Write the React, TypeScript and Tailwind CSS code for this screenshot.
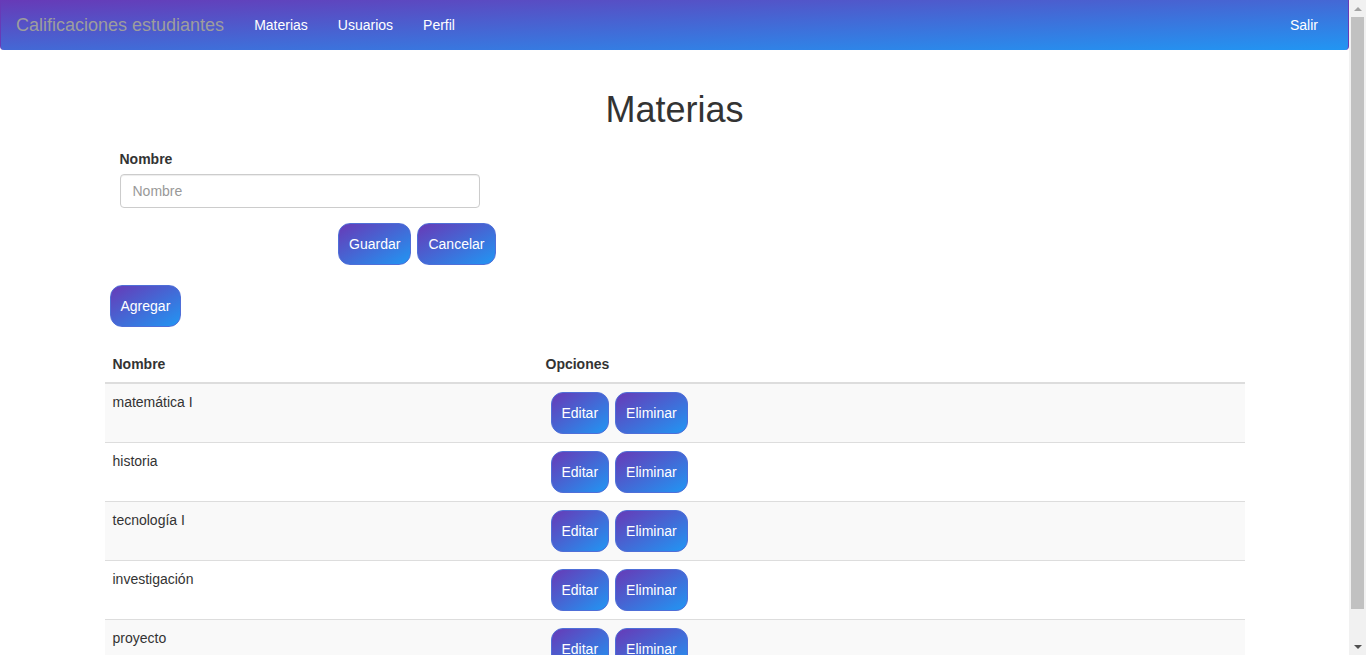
import { useState } from 'react';

const materias = ['matemática I', 'historia', 'tecnología I', 'investigación', 'proyecto'];

// boton con degradado morado -> azul
const BTN =
  'inline-block h-[42px] px-[10px] rounded-[12px] text-white text-[14px] leading-[20px] bg-[linear-gradient(to_bottom_right,#673ab7,#2196f3)] border border-[#4f6fd8]';

export default function App() {
  const [nombre, setNombre] = useState('');

  return (
    <div className="flex h-screen overflow-hidden bg-white text-[#333] text-[14px] leading-[20px] font-['Liberation_Sans',Arial,sans-serif]">
      <div className="flex-1 min-w-0 h-full overflow-hidden">
        <nav className="h-[50px] flex items-center justify-between rounded-b-[4px] border-l border-r border-[#673ab7] bg-[linear-gradient(to_bottom_right,#673ab7,#2196f3)] pl-[15px] pr-[15px]">
          <div className="flex items-center">
            <span className="text-[18px] leading-[20px] text-[#9d9d9d] pr-[15px]">Calificaciones estudiantes</span>
            <a className="text-white px-[15px] py-[15px]">Materias</a>
            <a className="text-white px-[15px] py-[15px]">Usuarios</a>
            <a className="text-white px-[15px] py-[15px]">Perfil</a>
          </div>
          <a className="text-white px-[15px] py-[15px]">Salir</a>
        </nav>

        <div className="w-[1140px] mx-auto">
          <h1 className="mt-[40px] mb-[10px] text-center text-[36px] leading-[40px]">Materias</h1>

          <div className="w-[391px] pt-[9px]">
            <div className="w-[390px] px-[15px]">
              <label className="block font-bold mb-[5px]">Nombre</label>
              <input
                value={nombre}
                onChange={(e) => setNombre(e.target.value)}
                placeholder="Nombre"
                className="w-full h-[34px] px-[12px] border border-[#ccc] rounded-[4px] shadow-[inset_0_1px_1px_rgba(0,0,0,0.075)] placeholder:text-[#999] outline-none"
              />
            </div>
            <div className="flex justify-end gap-[6px] mt-[15px]">
              <button className={BTN}>Guardar</button>
              <button className={BTN}>Cancelar</button>
            </div>
          </div>

          <div className="mt-[20px] pl-[5px]">
            <button className={`${BTN} h-[41px]`}>Agregar</button>
          </div>

          <table className="w-full mt-[19px] border-collapse">
            <thead>
              <tr>
                <th className="w-[433px] text-left p-[8px] border-b-2 border-[#ddd]">Nombre</th>
                <th className="text-left p-[8px] border-b-2 border-[#ddd]">Opciones</th>
              </tr>
            </thead>
            <tbody>
              {materias.map((m, i) => (
                <tr key={m} className={i % 2 === 0 ? 'bg-[#f9f9f9]' : ''}>
                  <td className="align-top p-[8px] border-t border-[#ddd]">{m}</td>
                  <td className="align-top p-[8px] border-t border-[#ddd]">
                    <div className="flex gap-[6px] pl-[5px]">
                      <button className={BTN}>Editar</button>
                      <button className={BTN}>Eliminar</button>
                    </div>
                  </td>
                </tr>
              ))}
            </tbody>
          </table>
        </div>
      </div>

      {/* barra de desplazamiento */}
      <div className="w-[17px] shrink-0 h-full bg-[#f1f1f1] flex flex-col items-center">
        <div className="h-[17px] flex items-center justify-center">
          <div className="w-0 h-0 border-l-[4px] border-r-[4px] border-b-[4px] border-l-transparent border-r-transparent border-b-[#a3a3a3]" />
        </div>
        <div className="w-[13px] h-[592px] bg-[#c1c1c1]" />
        <div className="flex-1" />
        <div className="h-[17px] flex items-center justify-center">
          <div className="w-0 h-0 border-l-[4px] border-r-[4px] border-t-[4px] border-l-transparent border-r-transparent border-t-[#505050]" />
        </div>
      </div>
    </div>
  );
}
